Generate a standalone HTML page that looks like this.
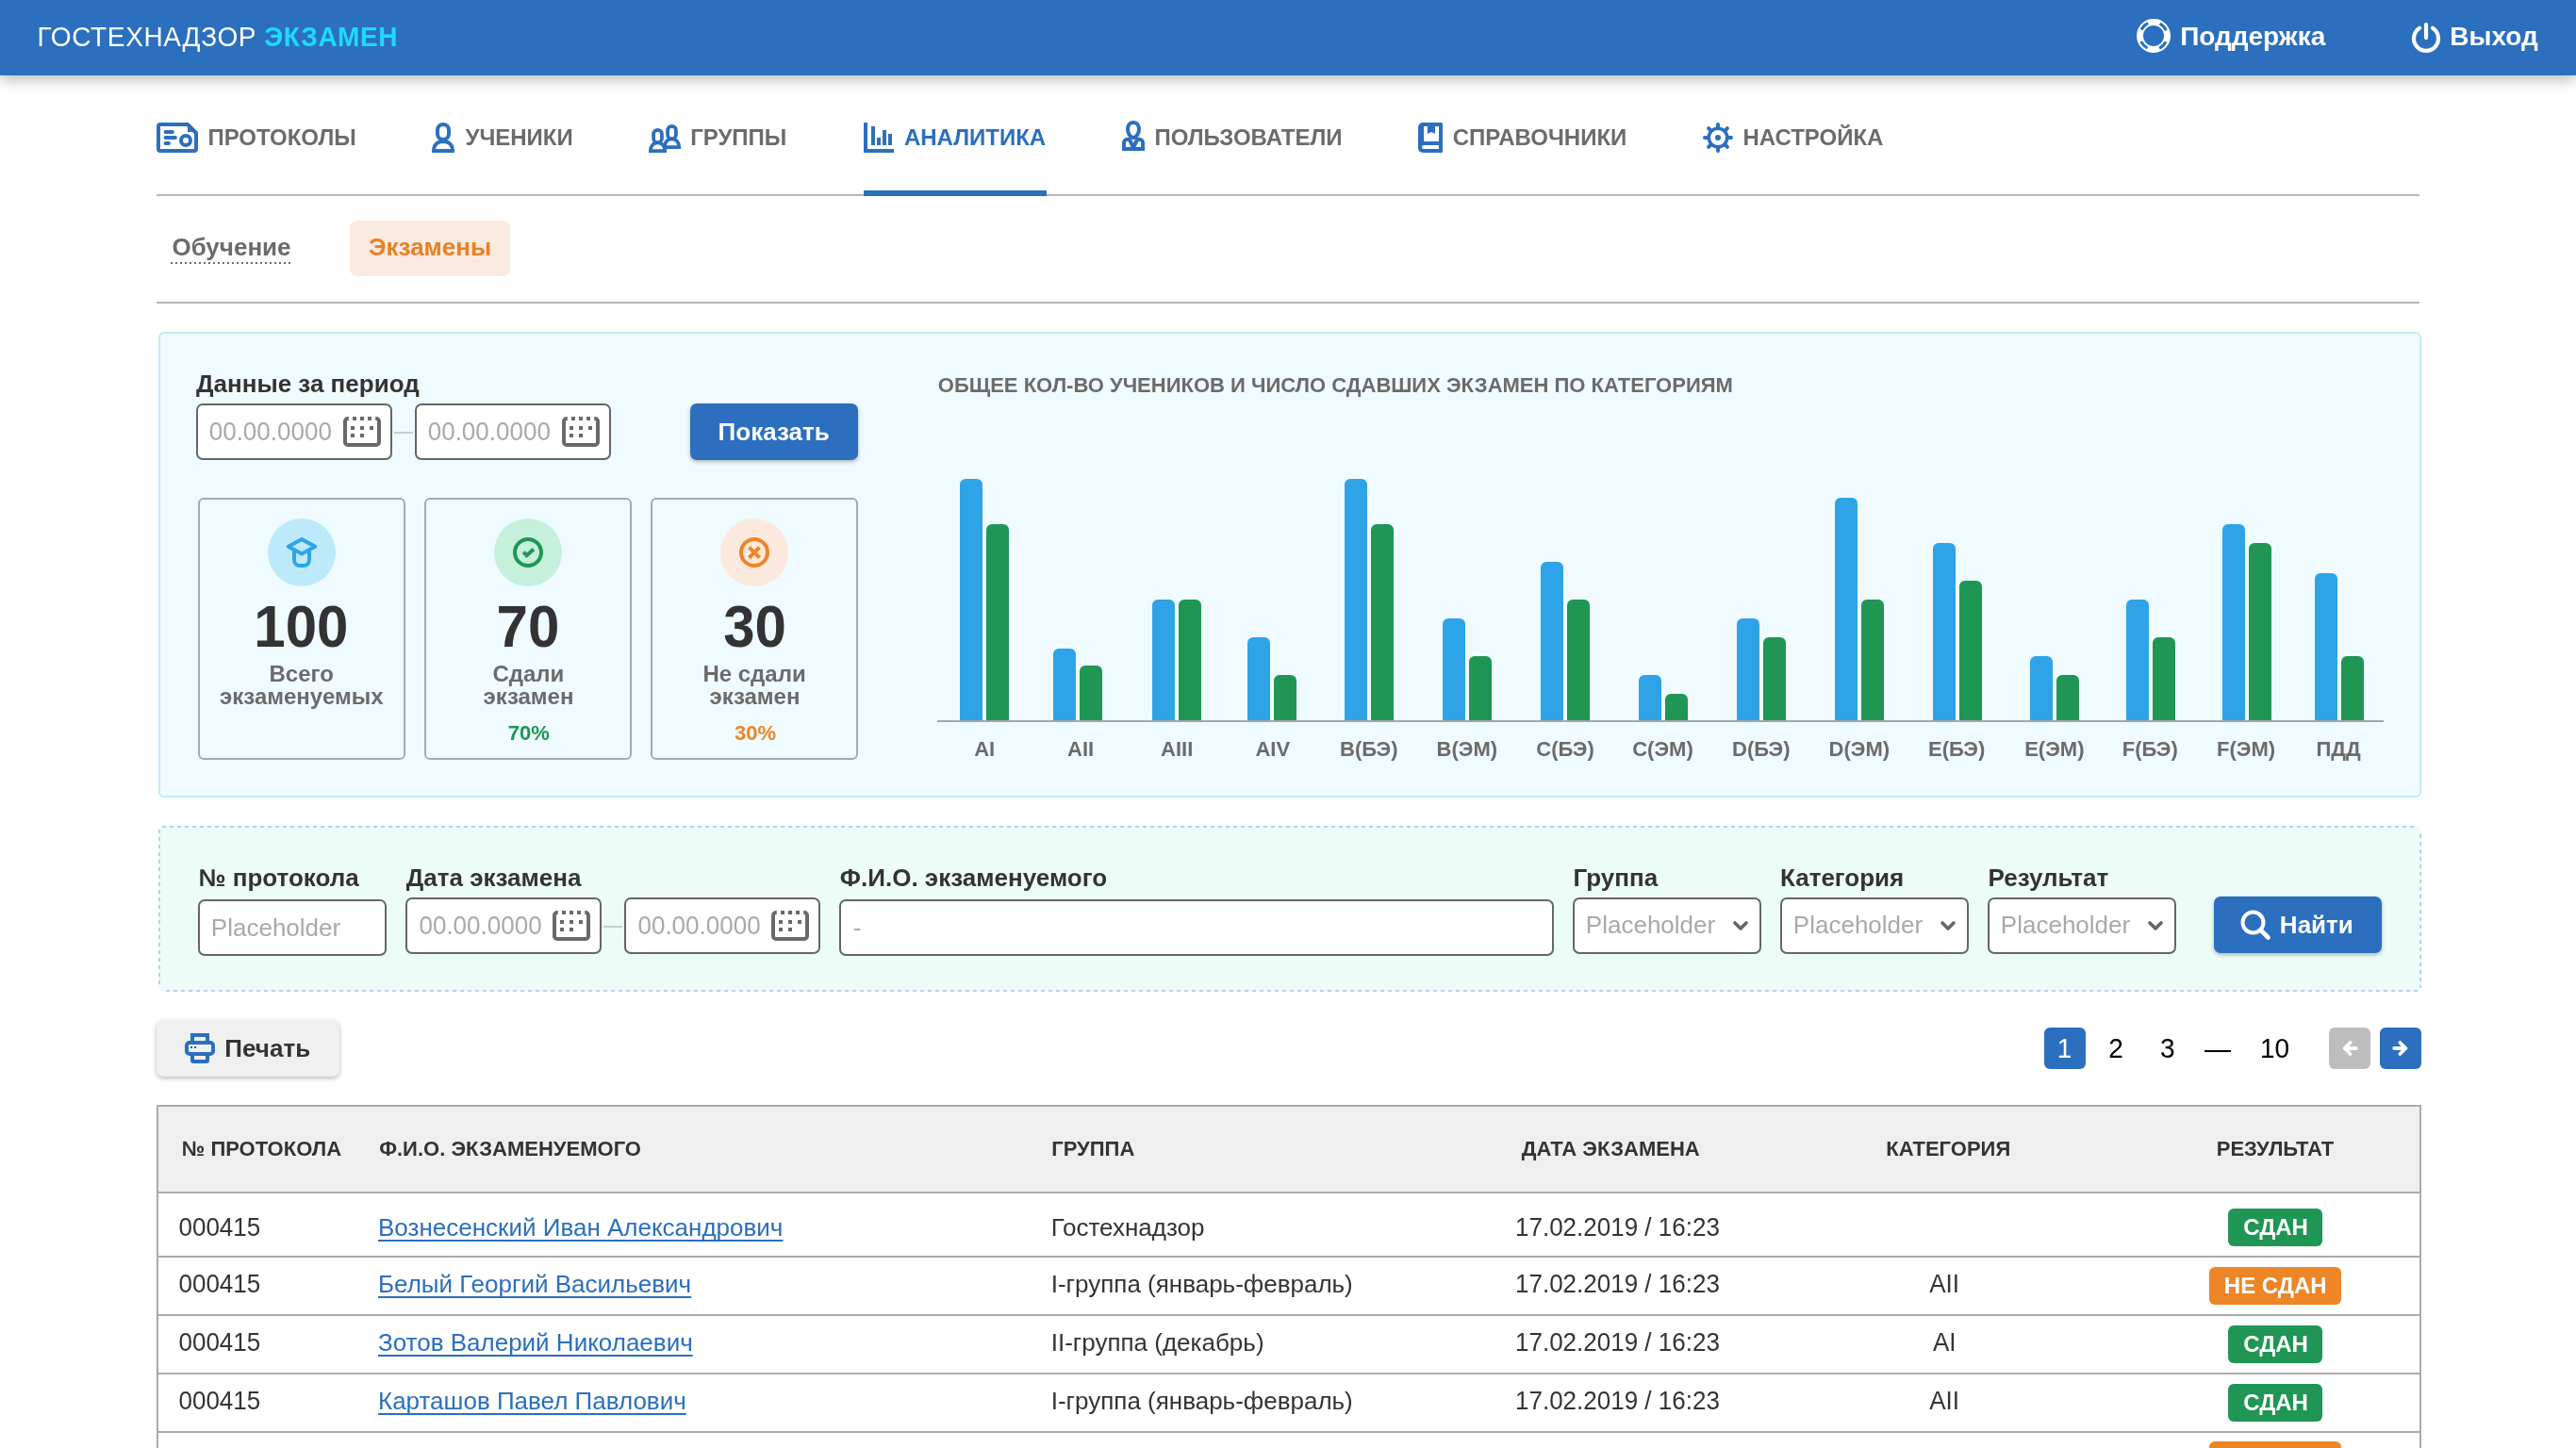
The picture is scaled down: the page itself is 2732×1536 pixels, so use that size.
<!DOCTYPE html>
<html lang="ru"><head><meta charset="utf-8"><title>Гостехнадзор Экзамен — Аналитика</title>
<style>
html,body{margin:0;padding:0;background:#fff;width:2732px;height:1536px;overflow:hidden;}
body{width:2732px;height:1536px;overflow:hidden;position:relative;font-family:"Liberation Sans", sans-serif;}
.a,.t{position:absolute;box-sizing:border-box;}
.t{white-space:nowrap;margin:0;}
svg{position:absolute;overflow:visible;}
.inp{background:#fff;border:2px solid #666;border-radius:7px;}
.card{border:2px solid #a9a9a9;border-radius:6px;}
.btn{background:#2b6fbe;border-radius:7px;box-shadow:0 2px 4px rgba(0,0,0,.27);}
.hl{background:#b7b7b7;height:2px;}
.rl{background:#ababab;height:2px;}
a.t{text-decoration:underline;text-decoration-thickness:2px;text-underline-offset:4px;text-decoration-skip-ink:none;}
#w{position:absolute;left:0;top:0;width:2732px;height:1536px;overflow:hidden;will-change:transform;}
</style></head><body><div id="w">

<div class="a" style="left:0px;top:0px;width:2732px;height:80px;background:#2b6fbe;box-shadow:0 4px 15px rgba(0,0,0,.29);z-index:5;"></div>
<div class="a" style="left:0;top:0;width:2732px;height:80px;z-index:6;">
<div class="t" style="left:39.50px;top:24px;font-size:28px;line-height:31px;color:#fff;letter-spacing:0.638px;transform:scaleY(1.04);transform-origin:0 25px;">ГОСТЕХНАДЗОР</div>
<div class="t" style="left:280.26px;top:24px;font-size:28px;line-height:31px;color:#1ddbfb;font-weight:700;letter-spacing:0.516px;transform:scaleY(1.04);transform-origin:0 25px;">ЭКЗАМЕН</div>
<div class="t" style="left:2312.13px;top:23px;font-size:28px;line-height:31px;color:#fff;font-weight:700;">Поддержка</div>
<div class="t" style="left:2598.33px;top:23px;font-size:28px;line-height:31px;color:#fff;font-weight:700;">Выход</div>
<svg style="left:2266px;top:20px" width="36" height="36" viewBox="0 0 36 36"><circle cx="18" cy="18" r="14.5" fill="none" stroke="#fff" stroke-width="7"/><circle cx="18" cy="18" r="14.5" fill="none" stroke="#2b6fbe" stroke-width="3" stroke-dasharray="9.87 12.906" stroke-dashoffset="-6.45"/></svg>
<svg style="left:2557px;top:23px" width="32" height="34" viewBox="0 0 32 34"><path d="M9.1 6.8A13 13 0 1 0 22.9 6.8" fill="none" stroke="#fff" stroke-width="4.2" stroke-linecap="round"/><path d="M16 3V17.1" stroke="#fff" stroke-width="4.2" stroke-linecap="round"/></svg>
</div>
<div class="a" style="left:166px;top:206px;width:2400px;height:2px;background:#b7b7b7;"></div>
<div class="a" style="left:916px;top:202px;width:194px;height:6px;background:#2b6fbe;"></div>
<div class="t" style="left:220.39px;top:132px;font-size:24px;line-height:27px;color:#6b6b6b;font-weight:700;">ПРОТОКОЛЫ</div>
<div class="t" style="left:493.49px;top:132px;font-size:24px;line-height:27px;color:#6b6b6b;font-weight:700;">УЧЕНИКИ</div>
<div class="t" style="left:732.14px;top:132px;font-size:24px;line-height:27px;color:#6b6b6b;font-weight:700;">ГРУППЫ</div>
<div class="t" style="left:958.90px;top:132px;font-size:24px;line-height:27px;color:#2b6fbe;font-weight:700;">АНАЛИТИКА</div>
<div class="t" style="left:1224.39px;top:132px;font-size:24px;line-height:27px;color:#6b6b6b;font-weight:700;">ПОЛЬЗОВАТЕЛИ</div>
<div class="t" style="left:1540.77px;top:132px;font-size:24px;line-height:27px;color:#6b6b6b;font-weight:700;">СПРАВОЧНИКИ</div>
<div class="t" style="left:1848.39px;top:132px;font-size:24px;line-height:27px;color:#6b6b6b;font-weight:700;">НАСТРОЙКА</div>
<svg style="left:166px;top:130px;" width="44" height="32" viewBox="0 0 44 32"><path d="M4 2H33L42 11V28a2 2 0 0 1-2 2H4a2 2 0 0 1-2-2V4a2 2 0 0 1 2-2z" fill="none" stroke="#2b6fbe" stroke-width="4" stroke-linejoin="round"/><path d="M32 1.5L42.5 12V10L34 1.5z" fill="#2b6fbe"/><path d="M33 2v8h9z" fill="#2b6fbe"/><path d="M9.5 10H17M9.5 16H20M9.5 22H13" stroke="#2b6fbe" stroke-width="3.8" stroke-linecap="round"/><circle cx="31" cy="19" r="5" fill="none" stroke="#2b6fbe" stroke-width="4"/></svg>
<svg style="left:458px;top:130px;" width="24" height="32" viewBox="0 0 24 32"><rect x="6" y="2" width="12" height="16" rx="6" fill="none" stroke="#2b6fbe" stroke-width="4"/><path d="M2 30C2 24 6 20 12 20C18 20 22 24 22 30Z" fill="none" stroke="#2b6fbe" stroke-width="4" stroke-linejoin="miter"/></svg>
<svg style="left:688px;top:132px;" width="34" height="30" viewBox="0 0 34 30"><g transform="translate(15,0)"><rect x="5.1" y="1.9" width="8.8" height="13.4" rx="4.4" fill="none" stroke="#2b6fbe" stroke-width="3.8"/><path d="M1.9 24.1C1.9 19 5 15.4 9.5 15.4C14 15.4 17.1 19 17.1 24.1Z" fill="none" stroke="#2b6fbe" stroke-width="3.8" stroke-linejoin="miter"/></g><g transform="translate(0,4)"><rect x="5.1" y="1.9" width="8.8" height="13.4" rx="4.4" fill="none" stroke="#2b6fbe" stroke-width="3.8"/><path d="M1.9 24.1C1.9 19 5 15.4 9.5 15.4C14 15.4 17.1 19 17.1 24.1Z" fill="none" stroke="#2b6fbe" stroke-width="3.8" stroke-linejoin="miter"/></g></svg>
<svg style="left:916px;top:130px;" width="32" height="32" viewBox="0 0 32 32"><path d="M2 0V30H32" fill="none" stroke="#2b6fbe" stroke-width="4"/><rect x="8" y="4" width="4" height="20" fill="#2b6fbe"/><rect x="14" y="16" width="4" height="8" fill="#2b6fbe"/><rect x="20" y="8" width="4" height="16" fill="#2b6fbe"/><rect x="26" y="12" width="4" height="12" fill="#2b6fbe"/></svg>
<svg style="left:1190px;top:128px;overflow:hidden;" width="24" height="32" viewBox="0 0 24 32"><path d="M12 2C8 2 6 5.5 6 9c0 4.5 3 9 6 9s6-4.5 6-9c0-3.5-2-7-6-7z" fill="none" stroke="#2b6fbe" stroke-width="4"/><path d="M8.5 19.8H5.7a3.7 3.7 0 0 0-3.7 3.7V30H22V23.5a3.7 3.7 0 0 0-3.7-3.7H15.5" fill="none" stroke="#2b6fbe" stroke-width="4" stroke-linejoin="miter"/><path d="M7.6 19.5L12 28.5L16.4 19.5" fill="none" stroke="#2b6fbe" stroke-width="4" stroke-linejoin="bevel"/></svg>
<svg style="left:1504px;top:130px;" width="26" height="32" viewBox="0 0 26 32"><path d="M5 0H24.5a1.5 1.5 0 0 1 1.5 1.5V30.5a1.5 1.5 0 0 1-1.5 1.5H5a5 5 0 0 1-5-5V5a5 5 0 0 1 5-5z" fill="#2b6fbe"/><rect x="6" y="4" width="16" height="16" fill="#fff"/><path d="M10 4h8v8l-4-2-4 2z" fill="#2b6fbe"/><path d="M6 24H22V28H6a2 2 0 0 1 0-4z" fill="#fff"/></svg>
<svg style="left:1806px;top:130px;" width="32" height="32" viewBox="0 0 32 32"><circle cx="16" cy="16" r="9.75" fill="none" stroke="#2b6fbe" stroke-width="3.5"/><path d="M27.00 16.00L30.00 16.00M23.78 23.78L25.90 25.90M16.00 27.00L16.00 30.00M8.22 23.78L6.10 25.90M5.00 16.00L2.00 16.00M8.22 8.22L6.10 6.10M16.00 5.00L16.00 2.00M23.78 8.22L25.90 6.10" stroke="#2b6fbe" stroke-width="4" stroke-linecap="round"/><circle cx="16" cy="16" r="3" fill="#2b6fbe"/></svg>
<div class="a" style="left:371px;top:233.5px;width:170px;height:59px;background:#fbeadf;border-radius:8px;"></div>
<div class="t" style="left:182.43px;top:247px;font-size:26px;line-height:30px;color:#6b6b6b;font-weight:700;">Обучение</div>
<div class="a" style="left:181px;top:278px;width:128px;height:2px;background-image:repeating-linear-gradient(90deg,#6b6b6b 0 2px,transparent 2px 5px);"></div>
<div class="t" style="left:391.06px;top:247px;font-size:26px;line-height:30px;color:#e98127;font-weight:700;">Экзамены</div>
<div class="a" style="left:166px;top:320px;width:2400px;height:2px;background:#b7b7b7;"></div>
<div class="a" style="left:168px;top:352px;width:2400px;height:494px;background:#effbfe;border:2px solid #c4ebf9;border-radius:6px;"></div>
<div class="t" style="left:208.07px;top:392px;font-size:26px;line-height:30px;color:#333;font-weight:700;">Данные за период</div>
<div class="a inp" style="left:208px;top:428px;width:208px;height:60px;"></div>
<div class="t" style="left:221.73px;top:443px;font-size:26px;line-height:30px;color:#a9a9a9;transform:scaleY(1.04);transform-origin:0 24px;">00.00.0000</div>
<svg style="left:364px;top:442px;" width="40" height="32" viewBox="0 0 40 32"><path d="M5.8 2H5a3 3 0 0 0-3 3V27a3 3 0 0 0 3 3H35a3 3 0 0 0 3-3V5a3 3 0 0 0-3-3H34.2" fill="none" stroke="#696969" stroke-width="4"/><g fill="#696969"><rect x="10" y="0" width="4" height="4"/><rect x="18" y="0" width="4" height="4"/><rect x="26" y="0" width="4" height="4"/><rect x="8" y="10" width="4" height="4"/><rect x="18" y="10" width="4" height="4"/><rect x="28" y="10" width="4" height="4"/><rect x="8" y="18" width="4" height="4"/><rect x="18" y="18" width="4" height="4"/></g></svg>
<div class="a inp" style="left:440px;top:428px;width:208px;height:60px;"></div>
<div class="t" style="left:453.73px;top:443px;font-size:26px;line-height:30px;color:#a9a9a9;transform:scaleY(1.04);transform-origin:0 24px;">00.00.0000</div>
<svg style="left:596px;top:442px;" width="40" height="32" viewBox="0 0 40 32"><path d="M5.8 2H5a3 3 0 0 0-3 3V27a3 3 0 0 0 3 3H35a3 3 0 0 0 3-3V5a3 3 0 0 0-3-3H34.2" fill="none" stroke="#696969" stroke-width="4"/><g fill="#696969"><rect x="10" y="0" width="4" height="4"/><rect x="18" y="0" width="4" height="4"/><rect x="26" y="0" width="4" height="4"/><rect x="8" y="10" width="4" height="4"/><rect x="18" y="10" width="4" height="4"/><rect x="28" y="10" width="4" height="4"/><rect x="8" y="18" width="4" height="4"/><rect x="18" y="18" width="4" height="4"/></g></svg>
<div class="a" style="left:418px;top:458px;width:20px;height:2px;background:#c3cfd0;"></div>
<div class="a btn" style="left:732px;top:428px;width:178px;height:60px;"></div>
<div class="t" style="left:761.61px;top:443px;font-size:26px;line-height:30px;color:#fff;font-weight:700;">Показать</div>
<div class="a card" style="left:210px;top:528px;width:220px;height:278px;"></div>
<div class="a" style="left:284px;top:550px;width:72px;height:72px;background:#bdeafa;border-radius:50%;"></div>
<div class="t" style="left:269.29px;top:632px;font-size:60px;line-height:67px;color:#333;font-weight:700;transform:scaleY(1.04);transform-origin:0 54px;">100</div>
<div class="t" style="left:285.48px;top:701px;font-size:24px;line-height:27px;color:#6b6b6b;font-weight:700;">Всего</div>
<div class="t" style="left:233.04px;top:725px;font-size:24px;line-height:27px;color:#6b6b6b;font-weight:700;">экзаменуемых</div>
<div class="a card" style="left:450px;top:528px;width:220px;height:278px;"></div>
<div class="a" style="left:524px;top:550px;width:72px;height:72px;background:#c5f0dc;border-radius:50%;"></div>
<div class="t" style="left:526.57px;top:632px;font-size:60px;line-height:67px;color:#333;font-weight:700;transform:scaleY(1.04);transform-origin:0 54px;">70</div>
<div class="t" style="left:522.38px;top:701px;font-size:24px;line-height:27px;color:#6b6b6b;font-weight:700;">Сдали</div>
<div class="t" style="left:512.62px;top:725px;font-size:24px;line-height:27px;color:#6b6b6b;font-weight:700;">экзамен</div>
<div class="t" style="left:538.80px;top:765px;font-size:22px;line-height:25px;color:#209655;font-weight:700;">70%</div>
<div class="a card" style="left:690px;top:528px;width:220px;height:278px;"></div>
<div class="a" style="left:764px;top:550px;width:72px;height:72px;background:#fce9dd;border-radius:50%;"></div>
<div class="t" style="left:767.17px;top:632px;font-size:60px;line-height:67px;color:#333;font-weight:700;transform:scaleY(1.04);transform-origin:0 54px;">30</div>
<div class="t" style="left:745.39px;top:701px;font-size:24px;line-height:27px;color:#6b6b6b;font-weight:700;">Не сдали</div>
<div class="t" style="left:752.62px;top:725px;font-size:24px;line-height:27px;color:#6b6b6b;font-weight:700;">экзамен</div>
<div class="t" style="left:779.02px;top:765px;font-size:22px;line-height:25px;color:#ee8527;font-weight:700;">30%</div>
<svg style="left:304px;top:568px;" width="32" height="36" viewBox="0 0 32 36"><path d="M8 15.5V26a6 6 0 0 0 6 6h4a6 6 0 0 0 6-6V15.5" fill="none" stroke="#2ea3e8" stroke-width="4"/><path d="M16 3.9L30.2 11.8L16 19.6L1.8 11.8Z" fill="#bdeafa" stroke="#2ea3e8" stroke-width="4" stroke-linejoin="round"/></svg>
<svg style="left:544px;top:570px;" width="32" height="32" viewBox="0 0 32 32"><circle cx="16" cy="16" r="14" fill="none" stroke="#209655" stroke-width="4"/><path d="M11.2 15.6L14.6 19.2L22 12.5" fill="none" stroke="#209655" stroke-width="4"/></svg>
<svg style="left:784px;top:570px;" width="32" height="32" viewBox="0 0 32 32"><circle cx="16" cy="16" r="14" fill="none" stroke="#ee8527" stroke-width="4"/><path d="M10.5 10.6L21.5 21.6M21.5 10.6L10.5 21.6" fill="none" stroke="#ee8527" stroke-width="4"/></svg>
<div class="t" style="left:994.85px;top:396px;font-size:22px;line-height:25px;color:#6b6b6b;font-weight:700;">ОБЩЕЕ КОЛ-ВО УЧЕНИКОВ И ЧИСЛО СДАВШИХ ЭКЗАМЕН ПО КАТЕГОРИЯМ</div>
<div class="a" style="left:994px;top:764px;width:1534px;height:2px;background:#a6a6a6;"></div>
<div class="a" style="left:1018px;top:508px;width:24px;height:256px;background:#2ea3e8;border-radius:6px 6px 0 0;"></div>
<div class="a" style="left:1046px;top:556px;width:24px;height:208px;background:#209655;border-radius:6px 6px 0 0;"></div>
<div class="t" style="left:1033.16px;top:782px;font-size:22px;line-height:25px;color:#6b6b6b;font-weight:700;">AI</div>
<div class="a" style="left:1117px;top:688px;width:24px;height:76px;background:#2ea3e8;border-radius:6px 6px 0 0;"></div>
<div class="a" style="left:1145px;top:706px;width:24px;height:58px;background:#209655;border-radius:6px 6px 0 0;"></div>
<div class="t" style="left:1132.11px;top:782px;font-size:22px;line-height:25px;color:#6b6b6b;font-weight:700;">AII</div>
<div class="a" style="left:1222px;top:636px;width:24px;height:128px;background:#2ea3e8;border-radius:6px 6px 0 0;"></div>
<div class="a" style="left:1250px;top:636px;width:24px;height:128px;background:#209655;border-radius:6px 6px 0 0;"></div>
<div class="t" style="left:1231.05px;top:782px;font-size:22px;line-height:25px;color:#6b6b6b;font-weight:700;">AIII</div>
<div class="a" style="left:1323px;top:676px;width:24px;height:88px;background:#2ea3e8;border-radius:6px 6px 0 0;"></div>
<div class="a" style="left:1351px;top:716px;width:24px;height:48px;background:#209655;border-radius:6px 6px 0 0;"></div>
<div class="t" style="left:1331.46px;top:782px;font-size:22px;line-height:25px;color:#6b6b6b;font-weight:700;">AIV</div>
<div class="a" style="left:1426px;top:508px;width:24px;height:256px;background:#2ea3e8;border-radius:6px 6px 0 0;"></div>
<div class="a" style="left:1454px;top:556px;width:24px;height:208px;background:#209655;border-radius:6px 6px 0 0;"></div>
<div class="t" style="left:1421.08px;top:782px;font-size:22px;line-height:25px;color:#6b6b6b;font-weight:700;">B(БЭ)</div>
<div class="a" style="left:1530px;top:656px;width:24px;height:108px;background:#2ea3e8;border-radius:6px 6px 0 0;"></div>
<div class="a" style="left:1558px;top:696px;width:24px;height:68px;background:#209655;border-radius:6px 6px 0 0;"></div>
<div class="t" style="left:1523.55px;top:782px;font-size:22px;line-height:25px;color:#6b6b6b;font-weight:700;">B(ЭМ)</div>
<div class="a" style="left:1634px;top:596px;width:24px;height:168px;background:#2ea3e8;border-radius:6px 6px 0 0;"></div>
<div class="a" style="left:1662px;top:636px;width:24px;height:128px;background:#209655;border-radius:6px 6px 0 0;"></div>
<div class="t" style="left:1629.37px;top:782px;font-size:22px;line-height:25px;color:#6b6b6b;font-weight:700;">C(БЭ)</div>
<div class="a" style="left:1738px;top:716px;width:24px;height:48px;background:#2ea3e8;border-radius:6px 6px 0 0;"></div>
<div class="a" style="left:1766px;top:736px;width:24px;height:28px;background:#209655;border-radius:6px 6px 0 0;"></div>
<div class="t" style="left:1731.24px;top:782px;font-size:22px;line-height:25px;color:#6b6b6b;font-weight:700;">C(ЭМ)</div>
<div class="a" style="left:1842px;top:656px;width:24px;height:108px;background:#2ea3e8;border-radius:6px 6px 0 0;"></div>
<div class="a" style="left:1870px;top:676px;width:24px;height:88px;background:#209655;border-radius:6px 6px 0 0;"></div>
<div class="t" style="left:1837.08px;top:782px;font-size:22px;line-height:25px;color:#6b6b6b;font-weight:700;">D(БЭ)</div>
<div class="a" style="left:1946px;top:528px;width:24px;height:236px;background:#2ea3e8;border-radius:6px 6px 0 0;"></div>
<div class="a" style="left:1974px;top:636px;width:24px;height:128px;background:#209655;border-radius:6px 6px 0 0;"></div>
<div class="t" style="left:1939.55px;top:782px;font-size:22px;line-height:25px;color:#6b6b6b;font-weight:700;">D(ЭМ)</div>
<div class="a" style="left:2050px;top:576px;width:24px;height:188px;background:#2ea3e8;border-radius:6px 6px 0 0;"></div>
<div class="a" style="left:2078px;top:616px;width:24px;height:148px;background:#209655;border-radius:6px 6px 0 0;"></div>
<div class="t" style="left:2044.99px;top:782px;font-size:22px;line-height:25px;color:#6b6b6b;font-weight:700;">E(БЭ)</div>
<div class="a" style="left:2153px;top:696px;width:24px;height:68px;background:#2ea3e8;border-radius:6px 6px 0 0;"></div>
<div class="a" style="left:2181px;top:716px;width:24px;height:48px;background:#209655;border-radius:6px 6px 0 0;"></div>
<div class="t" style="left:2147.16px;top:782px;font-size:22px;line-height:25px;color:#6b6b6b;font-weight:700;">E(ЭМ)</div>
<div class="a" style="left:2255px;top:636px;width:24px;height:128px;background:#2ea3e8;border-radius:6px 6px 0 0;"></div>
<div class="a" style="left:2283px;top:676px;width:24px;height:88px;background:#209655;border-radius:6px 6px 0 0;"></div>
<div class="t" style="left:2250.81px;top:782px;font-size:22px;line-height:25px;color:#6b6b6b;font-weight:700;">F(БЭ)</div>
<div class="a" style="left:2357px;top:556px;width:24px;height:208px;background:#2ea3e8;border-radius:6px 6px 0 0;"></div>
<div class="a" style="left:2385px;top:576px;width:24px;height:188px;background:#209655;border-radius:6px 6px 0 0;"></div>
<div class="t" style="left:2350.98px;top:782px;font-size:22px;line-height:25px;color:#6b6b6b;font-weight:700;">F(ЭМ)</div>
<div class="a" style="left:2455px;top:608px;width:24px;height:156px;background:#2ea3e8;border-radius:6px 6px 0 0;"></div>
<div class="a" style="left:2483px;top:696px;width:24px;height:68px;background:#209655;border-radius:6px 6px 0 0;"></div>
<div class="t" style="left:2456.48px;top:782px;font-size:22px;line-height:25px;color:#6b6b6b;font-weight:700;">ПДД</div>
<div class="a" style="left:168px;top:876px;width:2400px;height:176px;background:#ecfdf8;border-radius:6px;"></div>
<div class="a" style="left:172px;top:876px;width:2392px;height:2px;background-image:repeating-linear-gradient(90deg,#bccfe8 0 4px,transparent 4px 8px);"></div>
<div class="a" style="left:176px;top:1050px;width:2388px;height:2px;background-image:repeating-linear-gradient(90deg,#bccfe8 0 4px,transparent 4px 8px);"></div>
<div class="a" style="left:168px;top:880px;width:2px;height:168px;background-image:repeating-linear-gradient(180deg,#bccfe8 0 4px,transparent 4px 8px);"></div>
<div class="a" style="left:2566px;top:885px;width:2px;height:163px;background-image:repeating-linear-gradient(180deg,#bccfe8 0 4px,transparent 4px 8px);"></div>
<div class="t" style="left:210.51px;top:916px;font-size:26px;line-height:30px;color:#333;font-weight:700;">№ протокола</div>
<div class="t" style="left:430.77px;top:916px;font-size:26px;line-height:30px;color:#333;font-weight:700;">Дата экзамена</div>
<div class="t" style="left:890.85px;top:916px;font-size:26px;line-height:30px;color:#333;font-weight:700;">Ф.И.О. экзаменуемого</div>
<div class="t" style="left:1668.51px;top:916px;font-size:26px;line-height:30px;color:#333;font-weight:700;">Группа</div>
<div class="t" style="left:1888.01px;top:916px;font-size:26px;line-height:30px;color:#333;font-weight:700;">Категория</div>
<div class="t" style="left:2108.51px;top:916px;font-size:26px;line-height:30px;color:#333;font-weight:700;">Результат</div>
<div class="a inp" style="left:210px;top:954px;width:200px;height:60px;"></div>
<div class="t" style="left:223.87px;top:969px;font-size:26px;line-height:30px;color:#a9a9a9;">Placeholder</div>
<div class="a inp" style="left:430px;top:952px;width:208px;height:60px;"></div>
<div class="t" style="left:444.48px;top:967px;font-size:26px;line-height:30px;color:#a9a9a9;transform:scaleY(1.04);transform-origin:0 24px;">00.00.0000</div>
<svg style="left:586px;top:966px;" width="40" height="32" viewBox="0 0 40 32"><path d="M5.8 2H5a3 3 0 0 0-3 3V27a3 3 0 0 0 3 3H35a3 3 0 0 0 3-3V5a3 3 0 0 0-3-3H34.2" fill="none" stroke="#696969" stroke-width="4"/><g fill="#696969"><rect x="10" y="0" width="4" height="4"/><rect x="18" y="0" width="4" height="4"/><rect x="26" y="0" width="4" height="4"/><rect x="8" y="10" width="4" height="4"/><rect x="18" y="10" width="4" height="4"/><rect x="28" y="10" width="4" height="4"/><rect x="8" y="18" width="4" height="4"/><rect x="18" y="18" width="4" height="4"/></g></svg>
<div class="a inp" style="left:662px;top:952px;width:208px;height:60px;"></div>
<div class="t" style="left:676.48px;top:967px;font-size:26px;line-height:30px;color:#a9a9a9;transform:scaleY(1.04);transform-origin:0 24px;">00.00.0000</div>
<svg style="left:818px;top:966px;" width="40" height="32" viewBox="0 0 40 32"><path d="M5.8 2H5a3 3 0 0 0-3 3V27a3 3 0 0 0 3 3H35a3 3 0 0 0 3-3V5a3 3 0 0 0-3-3H34.2" fill="none" stroke="#696969" stroke-width="4"/><g fill="#696969"><rect x="10" y="0" width="4" height="4"/><rect x="18" y="0" width="4" height="4"/><rect x="26" y="0" width="4" height="4"/><rect x="8" y="10" width="4" height="4"/><rect x="18" y="10" width="4" height="4"/><rect x="28" y="10" width="4" height="4"/><rect x="8" y="18" width="4" height="4"/><rect x="18" y="18" width="4" height="4"/></g></svg>
<div class="a" style="left:640px;top:982px;width:20px;height:2px;background:#c3cfd0;"></div>
<div class="a inp" style="left:890px;top:954px;width:758px;height:60px;"></div>
<div class="t" style="left:904.84px;top:969px;font-size:26px;line-height:30px;color:#a9a9a9;">-</div>
<div class="a inp" style="left:1668px;top:952px;width:200px;height:60px;"></div>
<div class="t" style="left:1681.87px;top:966px;font-size:26px;line-height:30px;color:#a9a9a9;">Placeholder</div>
<svg style="left:1838px;top:977px" width="16" height="11" viewBox="0 0 16 11"><path d="M2 2l6 6 6-6" fill="none" stroke="#666" stroke-width="3.6" stroke-linecap="round" stroke-linejoin="round"/></svg>
<div class="a inp" style="left:1888px;top:952px;width:200px;height:60px;"></div>
<div class="t" style="left:1901.87px;top:966px;font-size:26px;line-height:30px;color:#a9a9a9;">Placeholder</div>
<svg style="left:2058px;top:977px" width="16" height="11" viewBox="0 0 16 11"><path d="M2 2l6 6 6-6" fill="none" stroke="#666" stroke-width="3.6" stroke-linecap="round" stroke-linejoin="round"/></svg>
<div class="a inp" style="left:2108px;top:952px;width:200px;height:60px;"></div>
<div class="t" style="left:2121.87px;top:966px;font-size:26px;line-height:30px;color:#a9a9a9;">Placeholder</div>
<svg style="left:2278px;top:977px" width="16" height="11" viewBox="0 0 16 11"><path d="M2 2l6 6 6-6" fill="none" stroke="#666" stroke-width="3.6" stroke-linecap="round" stroke-linejoin="round"/></svg>
<div class="a btn" style="left:2348px;top:951px;width:178px;height:60px;"></div>
<div class="t" style="left:2417.86px;top:966px;font-size:26px;line-height:30px;color:#fff;font-weight:700;">Найти</div>
<svg style="left:2376px;top:965px" width="32" height="32" viewBox="0 0 32 32"><circle cx="13.5" cy="13.5" r="11" fill="none" stroke="#fff" stroke-width="4"/><path d="M21.5 21.5l8 8" stroke="#fff" stroke-width="4.6" stroke-linecap="round"/></svg>
<div class="a" style="left:166px;top:1082px;width:194px;height:60px;background:#f0f0f0;border-radius:7px;box-shadow:0 2px 5px rgba(0,0,0,.28);"></div>
<div class="t" style="left:238.36px;top:1097px;font-size:26px;line-height:30px;color:#333;font-weight:700;">Печать</div>
<svg style="left:196px;top:1096px;" width="32" height="32" viewBox="0 0 32 32"><rect x="8" y="2" width="16" height="8" fill="none" stroke="#2b6fbe" stroke-width="4"/><rect x="2" y="10" width="28" height="12" rx="3" fill="none" stroke="#2b6fbe" stroke-width="4"/><path d="M8 24V29a1 1 0 0 0 1 1H23a1 1 0 0 0 1-1V24" fill="none" stroke="#2b6fbe" stroke-width="4"/><rect x="6" y="14" width="2" height="2" fill="#1b5fb4"/><rect x="10" y="14" width="2" height="2" fill="#1b5fb4"/></svg>
<div class="a" style="left:2168px;top:1090px;width:44px;height:44px;background:#2b6fbe;border-radius:6px;"></div>
<div class="t" style="left:2181.83px;top:1097px;font-size:28px;line-height:31px;color:#fff;transform:scaleY(1.04);transform-origin:0 25px;">1</div>
<div class="t" style="left:2236.21px;top:1097px;font-size:28px;line-height:31px;color:#000;transform:scaleY(1.04);transform-origin:0 25px;">2</div>
<div class="t" style="left:2291.05px;top:1097px;font-size:28px;line-height:31px;color:#000;transform:scaleY(1.04);transform-origin:0 25px;">3</div>
<div class="a" style="left:2338px;top:1114px;width:28px;height:2px;background:#000;"></div>
<div class="t" style="left:2396.91px;top:1097px;font-size:28px;line-height:31px;color:#000;transform:scaleY(1.04);transform-origin:0 25px;">10</div>
<div class="a" style="left:2470px;top:1090px;width:44px;height:44px;background:#bdbdbd;border-radius:6px;"></div>
<div class="a" style="left:2524px;top:1090px;width:44px;height:44px;background:#2b6fbe;border-radius:6px;"></div>
<svg style="left:2484px;top:1104px" width="16" height="16" viewBox="0 0 16 16"><path d="M14.8 8H3M8.6 2L2.6 8 8.6 14" fill="none" stroke="#fff" stroke-width="3.8" stroke-linecap="round" stroke-linejoin="round"/></svg>
<svg style="left:2538px;top:1104px" width="16" height="16" viewBox="0 0 16 16"><path d="M1.2 8H13M7.4 2L13.4 8 7.4 14" fill="none" stroke="#fff" stroke-width="3.8" stroke-linecap="round" stroke-linejoin="round"/></svg>
<div class="a" style="left:166px;top:1172px;width:2402px;height:364px;border:2px solid #ababab;border-bottom:none;background:#fff;"></div>
<div class="a" style="left:168px;top:1174px;width:2398px;height:90px;background:#efefef;"></div>
<div class="a" style="left:168px;top:1264px;width:2398px;height:2px;background:#ababab;"></div>
<div class="a" style="left:168px;top:1332px;width:2398px;height:2px;background:#ababab;"></div>
<div class="a" style="left:168px;top:1394px;width:2398px;height:2px;background:#ababab;"></div>
<div class="a" style="left:168px;top:1456px;width:2398px;height:2px;background:#ababab;"></div>
<div class="a" style="left:168px;top:1518px;width:2398px;height:2px;background:#ababab;"></div>
<div class="t" style="left:192.78px;top:1206px;font-size:22px;line-height:25px;color:#333;font-weight:700;">№ ПРОТОКОЛА</div>
<div class="t" style="left:402.24px;top:1206px;font-size:22px;line-height:25px;color:#333;font-weight:700;">Ф.И.О. ЭКЗАМЕНУЕМОГО</div>
<div class="t" style="left:1115.28px;top:1206px;font-size:22px;line-height:25px;color:#333;font-weight:700;">ГРУППА</div>
<div class="t" style="left:1613.81px;top:1206px;font-size:22px;line-height:25px;color:#333;font-weight:700;">ДАТА ЭКЗАМЕНА</div>
<div class="t" style="left:2000.28px;top:1206px;font-size:22px;line-height:25px;color:#333;font-weight:700;">КАТЕГОРИЯ</div>
<div class="t" style="left:2350.78px;top:1206px;font-size:22px;line-height:25px;color:#333;font-weight:700;">РЕЗУЛЬТАТ</div>
<div class="t" style="left:189.48px;top:1287px;font-size:26px;line-height:30px;color:#333;transform:scaleY(1.04);transform-origin:0 24px;">000415</div>
<a class="t" style="left:401.00px;top:1287px;font-size:26px;line-height:30px;color:#2b6fbe;">Вознесенский Иван Александрович</a>
<div class="t" style="left:1114.70px;top:1287px;font-size:26px;line-height:30px;color:#333;">Гостехнадзор</div>
<div class="t" style="left:1607.02px;top:1287px;font-size:26px;line-height:30px;color:#333;transform:scaleY(1.04);transform-origin:0 24px;">17.02.2019 / 16:23</div>
<div class="a" style="left:2362.5px;top:1282px;width:100px;height:40px;background:#209655;border-radius:6px;"></div>
<div class="t" style="left:2379.13px;top:1288px;font-size:24px;line-height:27px;color:#fff;font-weight:700;">СДАН</div>
<div class="t" style="left:189.48px;top:1347px;font-size:26px;line-height:30px;color:#333;transform:scaleY(1.04);transform-origin:0 24px;">000415</div>
<a class="t" style="left:401.00px;top:1347px;font-size:26px;line-height:30px;color:#2b6fbe;">Белый Георгий Васильевич</a>
<div class="t" style="left:1114.70px;top:1347px;font-size:26px;line-height:30px;color:#333;">I-группа (январь-февраль)</div>
<div class="t" style="left:1607.02px;top:1347px;font-size:26px;line-height:30px;color:#333;transform:scaleY(1.04);transform-origin:0 24px;">17.02.2019 / 16:23</div>
<div class="t" style="left:2046.28px;top:1347px;font-size:26px;line-height:30px;color:#333;transform:scaleY(1.04);transform-origin:0 24px;">AII</div>
<div class="a" style="left:2342.5px;top:1344px;width:140px;height:40px;background:#ee8527;border-radius:6px;"></div>
<div class="t" style="left:2358.81px;top:1350px;font-size:24px;line-height:27px;color:#fff;font-weight:700;">НЕ СДАН</div>
<div class="t" style="left:189.48px;top:1409px;font-size:26px;line-height:30px;color:#333;transform:scaleY(1.04);transform-origin:0 24px;">000415</div>
<a class="t" style="left:401.00px;top:1409px;font-size:26px;line-height:30px;color:#2b6fbe;">Зотов Валерий Николаевич</a>
<div class="t" style="left:1114.70px;top:1409px;font-size:26px;line-height:30px;color:#333;">II-группа (декабрь)</div>
<div class="t" style="left:1607.02px;top:1409px;font-size:26px;line-height:30px;color:#333;transform:scaleY(1.04);transform-origin:0 24px;">17.02.2019 / 16:23</div>
<div class="t" style="left:2049.89px;top:1409px;font-size:26px;line-height:30px;color:#333;transform:scaleY(1.04);transform-origin:0 24px;">AI</div>
<div class="a" style="left:2362.5px;top:1406px;width:100px;height:40px;background:#209655;border-radius:6px;"></div>
<div class="t" style="left:2379.13px;top:1412px;font-size:24px;line-height:27px;color:#fff;font-weight:700;">СДАН</div>
<div class="t" style="left:189.48px;top:1471px;font-size:26px;line-height:30px;color:#333;transform:scaleY(1.04);transform-origin:0 24px;">000415</div>
<a class="t" style="left:401.00px;top:1471px;font-size:26px;line-height:30px;color:#2b6fbe;">Карташов Павел Павлович</a>
<div class="t" style="left:1114.70px;top:1471px;font-size:26px;line-height:30px;color:#333;">I-группа (январь-февраль)</div>
<div class="t" style="left:1607.02px;top:1471px;font-size:26px;line-height:30px;color:#333;transform:scaleY(1.04);transform-origin:0 24px;">17.02.2019 / 16:23</div>
<div class="t" style="left:2046.28px;top:1471px;font-size:26px;line-height:30px;color:#333;transform:scaleY(1.04);transform-origin:0 24px;">AII</div>
<div class="a" style="left:2362.5px;top:1468px;width:100px;height:40px;background:#209655;border-radius:6px;"></div>
<div class="t" style="left:2379.13px;top:1474px;font-size:24px;line-height:27px;color:#fff;font-weight:700;">СДАН</div>
<div class="a" style="left:2342.5px;top:1529px;width:140px;height:40px;background:#ee8527;border-radius:6px;"></div>
</div></body></html>
